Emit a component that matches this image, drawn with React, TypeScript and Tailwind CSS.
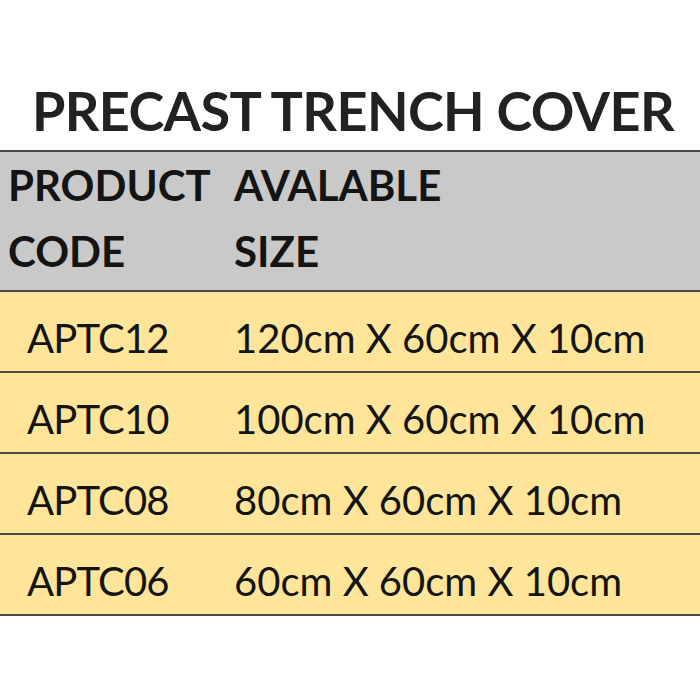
const rows = [
  { code: 'APTC12', size: '120cm X 60cm X 10cm' },
  { code: 'APTC10', size: '100cm X 60cm X 10cm' },
  { code: 'APTC08', size: '80cm X 60cm X 10cm' },
  { code: 'APTC06', size: '60cm X 60cm X 10cm' },
];

export default function App() {
  return (
    <div className="w-[700px] h-[700px] bg-white font-['Lato','Liberation_Sans',sans-serif] text-[#141414]">
      <div className="h-[150px] flex items-end justify-center pb-[12px]">
        <h1 className="text-[54px] font-bold leading-none text-[#222] tracking-[-0.6px] pl-[6px]">
          PRECAST TRENCH COVER
        </h1>
      </div>
      <div className="border-t-2 border-[#4a4a4a] bg-[#c9c9c9] h-[140px] flex flex-col font-bold text-[42px] leading-none">
        <div className="flex h-[66px] items-center">
          <span className="w-[234px] pl-[8px]">PRODUCT</span>
          <span>AVALABLE</span>
        </div>
        <div className="flex h-[66px] items-center">
          <span className="w-[234px] pl-[8px]">CODE</span>
          <span>SIZE</span>
        </div>
      </div>
      {rows.map((row) => (
        <div
          key={row.code}
          className="border-t-2 border-[#4a4a4a] bg-[#fee599] h-[81px] flex items-center pt-[12px] text-[40px] leading-none"
        >
          <span className="w-[234px] pl-[27px] tracking-[-0.8px]">{row.code}</span>
          <span>{row.size}</span>
        </div>
      ))}
      <div className="border-t-2 border-[#4a4a4a]" />
    </div>
  );
}
